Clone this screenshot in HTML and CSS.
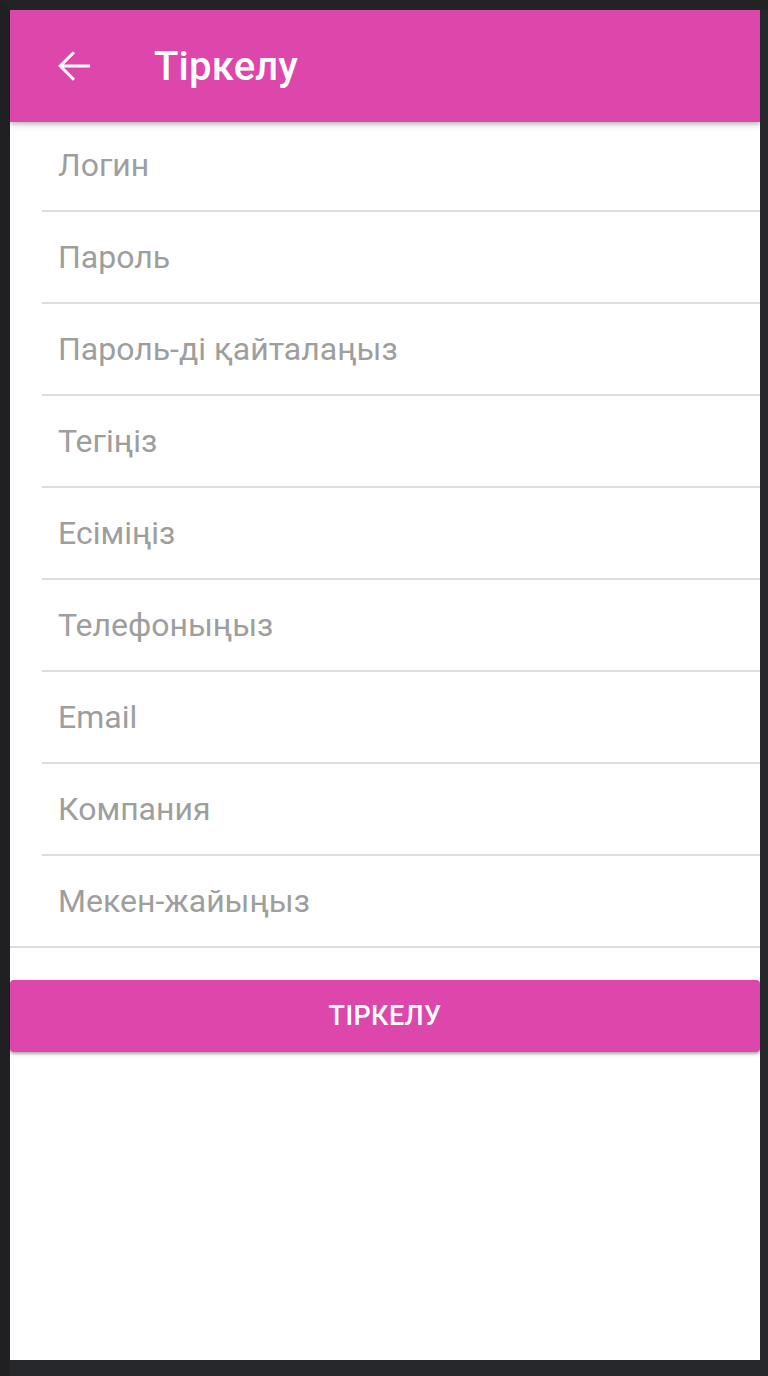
FILE: index.html
```html
<!DOCTYPE html>
<html lang="kk">
<head>
<meta charset="utf-8">
<title>Тіркелу</title>
<link rel="stylesheet" href="styles.css">
</head>
<body>
<div class="screen">
  <header class="appbar">
    <button class="back" aria-label="Артқа">
      <svg viewBox="0 0 24 24" width="48" height="48"><path fill="#fff" d="M20 11.25H6.9l5.6-5.6L11.45 4.6 4.05 12l7.4 7.4 1.05-1.05-5.6-5.6H20z"/></svg>
    </button>
    <h1 class="title">Тіркелу</h1>
  </header>
  <main class="content">
    <ul class="form">
      <li class="field">Логин</li>
      <li class="field">Пароль</li>
      <li class="field">Пароль-ді қайталаңыз</li>
      <li class="field">Тегіңіз</li>
      <li class="field">Есіміңіз</li>
      <li class="field">Телефоныңыз</li>
      <li class="field">Email</li>
      <li class="field">Компания</li>
      <li class="field field-last">Мекен-жайыңыз</li>
    </ul>
    <button class="submit">ТІРКЕЛУ</button>
  </main>
</div>
</body>
</html>
```

FILE: styles.css
```css
html, body {
  margin: 0;
  padding: 0;
}
body {
  background: #27282c;
  width: 768px;
  height: 1376px;
  box-sizing: border-box;
  border-top: 10px solid #232325;
  border-left: 10px solid #202022;
  font-family: Roboto, "Noto Sans", sans-serif;
}
.screen {
  width: 750px;
  height: 1350px;
  background: #ffffff;
  display: flex;
  flex-direction: column;
  overflow: hidden;
}
.appbar {
  position: relative;
  z-index: 2;
  height: 112px;
  margin-bottom: -2px;
  background: #dd46ab;
  display: flex;
  align-items: center;
  box-shadow: 0 2px 4px rgba(0,0,0,0.22), 0 4px 8px rgba(0,0,0,0.08);
}
.back {
  width: 48px;
  height: 48px;
  margin-left: 40px;
  padding: 0;
  border: 0;
  background: transparent;
  display: flex;
}
.title {
  margin: 0 0 0 56px;
  color: #ffffff;
  font-size: 40px;
  font-weight: 500;
  letter-spacing: 0.2px;
}
.content {
  display: flex;
  flex-direction: column;
}
.form {
  list-style: none;
  margin: 0;
  padding: 0;
}
.field {
  height: 90px;
  margin-left: 32px;
  padding-left: 16px;
  border-bottom: 2px solid #dedede;
  display: flex;
  align-items: center;
  font-size: 32px;
  color: #9e9e9e;
}
.field-last {
  margin-left: 0;
  padding-left: 48px;
}
.submit {
  margin-top: 32px;
  height: 72px;
  border: 0;
  border-radius: 4px;
  background: #dd46ab;
  color: #ffffff;
  font-family: Roboto, "Noto Sans", sans-serif;
  font-size: 27px;
  font-weight: 500;
  letter-spacing: 0.4px;
  box-shadow: 0 2px 3px rgba(0,0,0,0.28), 0 1px 6px rgba(0,0,0,0.1);
}
```
